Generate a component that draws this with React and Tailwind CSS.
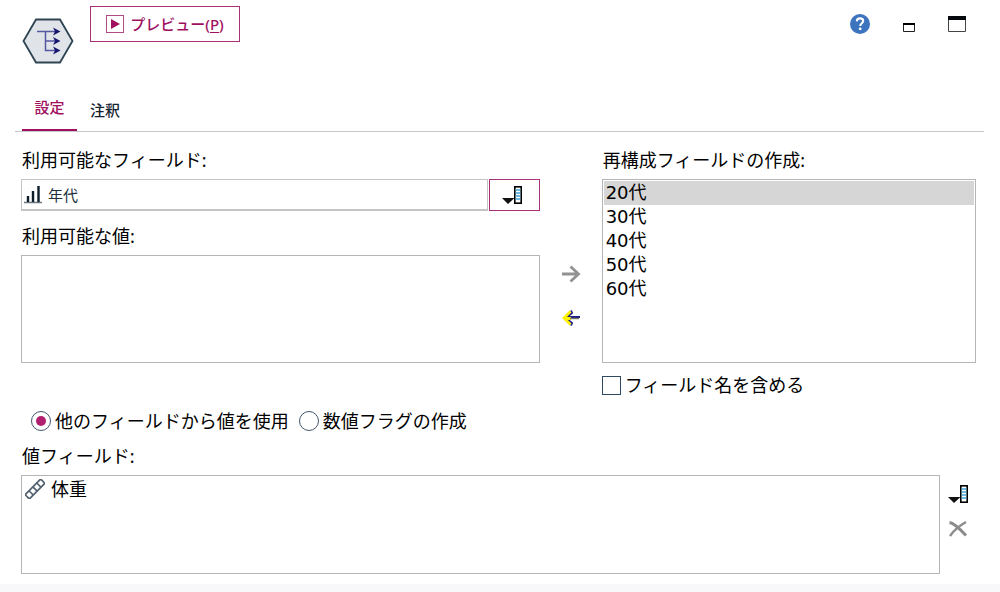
import { useState } from 'react';

const availableValues = [];
const initialFields = ['20代', '30代', '40代', '50代', '60代'];

const NodeIcon = () => (
  <svg width="52" height="46" viewBox="0 0 52 46" fill="none" aria-hidden="true">
    <path d="M14 1.5H38L50.5 23L38 44.5H14L1.5 23Z" fill="#e0e4e8" stroke="#2e4453" strokeWidth="1.8" />
    <path d="M15 13.5H33M23.5 13.5V32.5H33M23.5 23H33" stroke="#5557a0" strokeWidth="1.5" />
    <path d="M31 9.5L38.5 13.5L31 17.5L33 13.5ZM31 19L38.5 23L31 27L33 23ZM31 28.5L38.5 32.5L31 36.5L33 32.5Z" fill="#16166e" />
  </svg>
);

const FieldPickerIcon = () => (
  <svg width="20" height="19" viewBox="0 0 20 19" aria-hidden="true">
    <path d="M0 12H12.5L6 18Z" fill="#111" />
    <rect x="12.8" y="0.8" width="6.4" height="16.4" fill="#fff" stroke="#000" strokeWidth="1.6" />
    <path d="M13.6 4H18.4M13.6 7H18.4M13.6 10H18.4M13.6 13H18.4" stroke="#3fa4d8" strokeWidth="1.5" />
  </svg>
);

const OrdinalIcon = () => (
  <svg width="18" height="19" viewBox="0 0 18 19" fill="none" aria-hidden="true">
    <path d="M0 17.5H18" stroke="#6b7780" strokeWidth="1.5" />
    <path d="M4 11V17M9 6V17M14.5 1V17" stroke="#0c1c28" strokeWidth="2.4" />
  </svg>
);

const RulerIcon = () => (
  <svg width="20" height="20" viewBox="0 0 20 20" fill="none" stroke="#52616d" strokeWidth="1.7" aria-hidden="true">
    <g transform="rotate(-45 10 10)">
      <rect x="-1" y="7" width="22" height="6" rx="1.2" />
      <path d="M4.5 7V13M10 7V13M15.5 7V13" />
    </g>
  </svg>
);

const App = () => {
  const [tab, setTab] = useState('settings');
  const [fields, setFields] = useState(initialFields);
  const [selected, setSelected] = useState('20代');
  const [includeName, setIncludeName] = useState(false);
  const [mode, setMode] = useState('other');

  const removeSelected = () => {
    setFields((prev) => prev.filter((f) => f !== selected));
  };

  return (
    <div className="flex min-h-screen flex-col bg-white font-['Noto_Sans','Noto_Sans_CJK_JP',sans-serif] text-lg leading-6 text-black">
      <header className="flex items-start pt-1.5 pl-[22px] pr-[34px]">
        <div className="pt-3">
          <NodeIcon />
        </div>
        <button
          type="button"
          className="ml-4 flex h-9 w-[150px] items-center justify-center gap-1.5 border border-[#a8327a] text-[15px] font-medium text-[#9f1060]"
        >
          <svg width="18" height="18" viewBox="0 0 18 18" aria-hidden="true">
            <rect x="0.5" y="0.5" width="17" height="17" fill="none" stroke="#b04a85" />
            <path d="M5 4L14 9L5 14Z" fill="#9f1060" />
          </svg>
          <span>
            プレビュー(<span className="underline underline-offset-2">P</span>)
          </span>
        </button>
        <div className="ml-auto flex items-center gap-8 pt-2">
          <button type="button" aria-label="ヘルプ">
            <svg width="20" height="20" viewBox="0 0 20 20" fill="none" aria-hidden="true">
              <circle cx="10" cy="10" r="10" fill="#3c74bd" />
              <path d="M6.8 7.4C6.9 5.3 8.2 4.4 10 4.4C11.9 4.4 13.2 5.4 13.2 7.1C13.2 9.2 10.2 9.3 10.2 11.9" stroke="#fff" strokeWidth="2.1" />
              <circle cx="10.2" cy="14.8" r="1.4" fill="#fff" />
            </svg>
          </button>
          <button type="button" aria-label="最小化">
            <svg width="14" height="16" viewBox="0 0 14 16" aria-hidden="true">
              <path d="M1.5 7.5H12.5V15.5H1.5Z" fill="#fff" stroke="#222" />
              <path d="M1 7H13V9H1Z" fill="#000" />
            </svg>
          </button>
          <button type="button" aria-label="最大化">
            <svg width="18" height="16" viewBox="0 0 18 16" aria-hidden="true">
              <path d="M0.5 0.5H17.5V15.5H0.5Z" fill="#fff" stroke="#444" />
              <path d="M0 0H18V4H0Z" fill="#05080c" />
            </svg>
          </button>
        </div>
      </header>

      <nav className="ml-[15px] mr-4 mt-[31px] flex border-b border-[#c6c6c6] pl-[7px] text-[15px] font-medium" role="tablist">
        <button
          type="button"
          role="tab"
          aria-selected={tab === 'settings'}
          onClick={() => setTab('settings')}
          className="-mb-px h-9 w-[55px] border-b-2 border-[#9f1060] pb-3 text-[#9f1060]"
        >
          設定
        </button>
        <button
          type="button"
          role="tab"
          aria-selected={tab === 'notes'}
          onClick={() => setTab('notes')}
          className="h-9 w-14 pb-1.5 text-[#14242f]"
        >
          注釈
        </button>
      </nav>

      <main className="pl-[21px] pr-6 pt-4">
        <div className="flex">
          <section className="min-w-0 flex-1">
            <label htmlFor="field" className="block pl-px">
              利用可能なフィールド:
            </label>
            <div className="mt-[7px] flex gap-px">
              <div className="flex h-8 flex-1 items-center gap-1.5 border border-b-2 border-[#c4c4c4] pl-0.5">
                <OrdinalIcon />
                <input id="field" readOnly defaultValue="年代" className="min-w-0 flex-1 text-[15px] text-[#1c2f3d] outline-none" />
              </div>
              <button type="button" aria-label="フィールドの選択" className="flex h-8 w-[51px] items-center justify-center border border-[#a8327a] pr-1">
                <FieldPickerIcon />
              </button>
            </div>
            <p id="values-label" className="mt-[13px] pl-px">
              利用可能な値:
            </p>
            <ul role="listbox" aria-labelledby="values-label" className="mt-[7px] h-27 border border-[#b5b5b5]">
              {availableValues.map((v) => (
                <li key={v} role="option" aria-selected={false}>
                  {v}
                </li>
              ))}
            </ul>
          </section>

          <div className="flex w-[62px] flex-col items-center gap-6 pt-[116px]">
            <button type="button" aria-label="追加">
              <svg width="20" height="20" viewBox="0 0 20 20" fill="none" stroke="#929292" strokeWidth="2.8" aria-hidden="true">
                <path d="M1 10H17M9.5 2.5L17.5 10L9.5 17.5" />
              </svg>
            </button>
            <button type="button" aria-label="削除" onClick={removeSelected}>
              <svg width="20" height="20" viewBox="0 0 20 20" fill="none" aria-hidden="true">
                <path d="M10 2.5L11 5L6 9M10 17.5L11 15L6 11M6 9H19" stroke="#1d1d85" strokeWidth="2" />
                <path d="M9.5 3.5L3 10L9.5 16.5M3 10.5H10" stroke="#fff000" strokeWidth="2.8" />
                <path d="M9 10.5H18" stroke="#77775e" strokeWidth="1.4" />
              </svg>
            </button>
          </div>

          <section className="w-[39.2%]">
            <p id="created-label" className="pl-px">
              再構成フィールドの作成:
            </p>
            <ul role="listbox" aria-labelledby="created-label" className="mt-[7px] h-46 border border-[#b5b5b5] p-px">
              {fields.map((f) => (
                <li
                  key={f}
                  role="option"
                  aria-selected={selected === f}
                  onClick={() => setSelected(f)}
                  className={`px-0.5 font-['DejaVu_Sans','Noto_Sans_CJK_JP',sans-serif] ${selected === f ? 'bg-[#d6d6d6]' : ''}`}
                >
                  {f}
                </li>
              ))}
            </ul>
            <label className="mt-2.5 flex items-center gap-1">
              <input
                type="checkbox"
                checked={includeName}
                onChange={(e) => setIncludeName(e.target.checked)}
                className="size-[19px] appearance-none border border-[#2f4a60] checked:bg-[#9f1060]"
              />
              フィールド名を含める
            </label>
          </section>
        </div>

        <div className="mt-3 flex gap-2.5 pl-2.5">
          <label className="flex items-center gap-1">
            <input
              type="radio"
              name="mode"
              checked={mode === 'other'}
              onChange={() => setMode('other')}
              className="size-5 appearance-none rounded-full border border-[#42566a] p-1 checked:bg-[#b0206f] checked:bg-clip-content"
            />
            他のフィールドから値を使用
          </label>
          <label className="flex items-center gap-1">
            <input
              type="radio"
              name="mode"
              checked={mode === 'flag'}
              onChange={() => setMode('flag')}
              className="size-5 appearance-none rounded-full border border-[#42566a] p-1 checked:bg-[#b0206f] checked:bg-clip-content"
            />
            数値フラグの作成
          </label>
        </div>

        <p id="value-fields-label" className="mt-[11px] pl-px">
          値フィールド:
        </p>
        <div className="mt-[7px] flex">
          <ul role="listbox" aria-labelledby="value-fields-label" className="h-[99px] flex-1 border border-[#b5b5b5] px-[3px] pt-px">
            <li role="option" aria-selected={false} className="flex items-center gap-1.5">
              <RulerIcon />
              体重
            </li>
          </ul>
          <div className="flex w-9 flex-col items-center gap-4 pt-2.5">
            <button type="button" aria-label="値フィールドの選択">
              <FieldPickerIcon />
            </button>
            <button type="button" aria-label="値フィールドの削除">
              <svg width="20" height="18" viewBox="0 0 20 18" fill="none" stroke="#8c8c8c" aria-hidden="true">
                <path d="M1.5 2.5C6 3 12 9 18 15.5" strokeWidth="3" />
                <path d="M18 2C11 6 6 10 2 16" strokeWidth="2.4" />
              </svg>
            </button>
          </div>
        </div>
      </main>
      <footer className="mt-auto h-2 bg-[#f8f8fa]"></footer>
    </div>
  );
};

export default App;
